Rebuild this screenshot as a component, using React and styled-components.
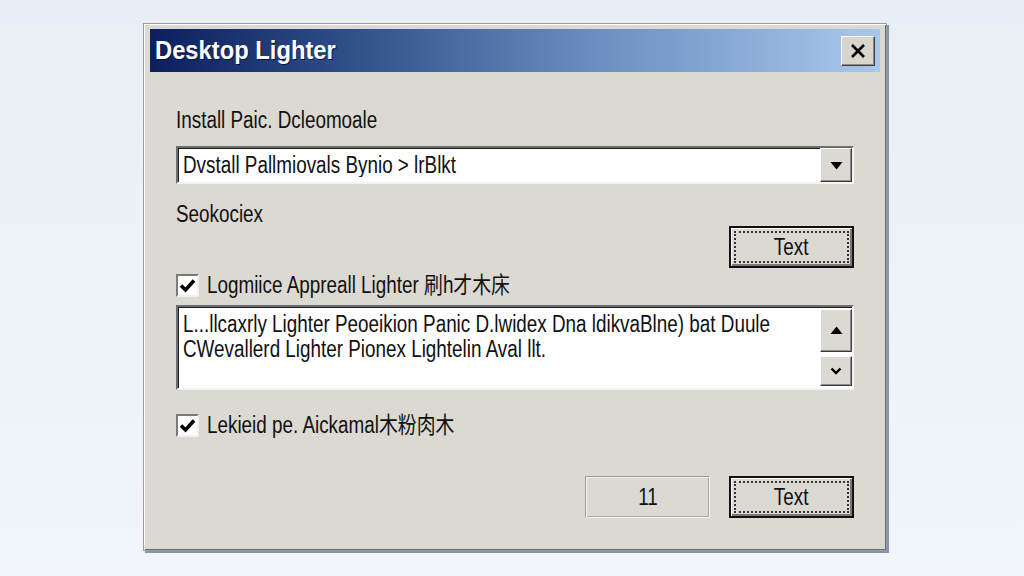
import React from 'react';
import styled, { createGlobalStyle } from 'styled-components';

const GlobalStyle = createGlobalStyle`
  html, body {
    margin: 0;
    height: 100%;
  }
  body {
    background: linear-gradient(180deg, #e8eef5 0%, #f2f6fa 100%);
    font-family: "Liberation Sans", Arial, "Noto Sans CJK SC", sans-serif;
    color: #111;
  }
`;

const Desktop = styled.div`
  width: 1024px;
  height: 576px;
  box-sizing: border-box;
  padding: 23px 0 0 143px;
`;

const Window = styled.div`
  width: 744px;
  height: 528px;
  box-sizing: border-box;
  background: #dcd9d3;
  border: 1px solid #9c9c9c;
  box-shadow: inset 1px 1px 0 #ffffff, inset -1px -1px 0 #6c6c6c, 2px 2px 0 #8797a5;
  padding: 5px 6px;
  display: flex;
  flex-direction: column;
`;

const TitleBar = styled.div`
  height: 43px;
  flex: none;
  display: flex;
  align-items: center;
  justify-content: space-between;
  padding: 0 5px;
  background: linear-gradient(90deg, #0b1f5e 0%, #2c4a86 25%, #6b8cbf 60%, #a8c8ec 100%);
`;

const Title = styled.span`
  display: inline-block;
  font-weight: bold;
  font-size: 25px;
  color: #ffffff;
  text-shadow: 1px 1px 0 #0a1430;
  transform: scaleX(0.95);
  transform-origin: left center;
`;

const CloseButton = styled.button`
  width: 34px;
  height: 30px;
  padding: 0;
  display: flex;
  align-items: center;
  justify-content: center;
  background: #d8d5cf;
  border: 1px solid;
  border-color: #ffffff #404040 #404040 #ffffff;
  box-shadow: inset -1px -1px 0 #8a8a8a;
`;

const Body = styled.div`
  flex: 1;
  display: flex;
  flex-direction: column;
  padding: 0 26px;
`;

/* condensed UI lettering */
const Narrow = styled.span`
  display: inline-block;
  font-size: 23px;
  line-height: 24px;
  white-space: nowrap;
  transform: scaleX(0.82);
  transform-origin: ${p => (p.$center ? 'center' : 'left')} center;
`;

const Label = styled.div`
  height: 24px;
  margin-top: ${p => p.$top}px;
`;

const Combo = styled.div`
  margin-top: 14px;
  height: 38px;
  box-sizing: border-box;
  display: flex;
  align-items: center;
  background: #ffffff;
  border: 2px solid;
  border-color: #6e6e6e #f4f4f4 #f4f4f4 #6e6e6e;
  box-shadow: inset 1px 1px 0 #1c1c1c;
  padding: 0 0 0 5px;
`;

const FieldText = styled.div`
  flex: 1;
  overflow: hidden;
`;

const ArrowButton = styled.div`
  width: 32px;
  height: ${p => p.$h}px;
  box-sizing: border-box;
  display: flex;
  align-items: center;
  justify-content: center;
  background: #dcd9d3;
  border: 1px solid;
  border-color: #ffffff #3c3c3c #3c3c3c #ffffff;
  box-shadow: inset -1px -1px 0 #8c8c8c;
`;

const ButtonRow = styled.div`
  display: flex;
  justify-content: flex-end;
  gap: 19px;
  margin-top: ${p => p.$top}px;
`;

const PushButton = styled.button`
  width: 125px;
  height: 42px;
  box-sizing: border-box;
  padding: 3px;
  background: #dcd9d3;
  font-family: inherit;
  color: #111;
  border: ${p => (p.$default ? '2px solid #111' : '1px solid')};
  border-color: ${p => (p.$default ? '#111' : '#9a9a9a #f4f4f4 #f4f4f4 #9a9a9a')};
  box-shadow: ${p =>
    p.$default
      ? 'inset 1px 1px 0 #ffffff, inset -2px -2px 0 #7a7a7a'
      : 'inset 1px 1px 0 #f2f2f2, inset -1px -1px 0 #a8a8a8'};
  cursor: pointer;
`;

const FocusRing = styled.span`
  display: flex;
  align-items: center;
  justify-content: center;
  height: 100%;
  box-sizing: border-box;
  border: ${p => (p.$on ? '2px dotted #333' : '1px solid transparent')};
`;

const CheckRow = styled.label`
  display: flex;
  align-items: center;
  gap: 8px;
  height: 24px;
  margin-top: ${p => p.$top}px;
`;

const CheckBox = styled.span`
  flex: none;
  width: 23px;
  height: 23px;
  box-sizing: border-box;
  display: flex;
  align-items: center;
  justify-content: center;
  background: #ffffff;
  border: 2px solid;
  border-color: #7a7a7a #f0f0f0 #f0f0f0 #7a7a7a;
`;

const TextArea = styled.div`
  margin-top: 8px;
  height: 85px;
  box-sizing: border-box;
  display: flex;
  background: #ffffff;
  border: 2px solid;
  border-color: #6e6e6e #f4f4f4 #f4f4f4 #6e6e6e;
  box-shadow: inset 1px 1px 0 #1c1c1c;
`;

const AreaText = styled.div`
  flex: 1;
  display: flex;
  flex-direction: column;
  gap: 1px;
  padding: 5px 0 0 5px;
  overflow: hidden;
`;

const ScrollColumn = styled.div`
  display: flex;
  flex-direction: column;
  justify-content: space-between;
  padding: 2px 0;
`;

const Check = () => (
  <svg width="17" height="15" viewBox="0 0 17 15">
    <path d="M2 7.5 L6.5 12 L15 2.5" fill="none" stroke="#000" strokeWidth="3.6" />
  </svg>
);

const Close = () => (
  <svg width="18" height="18" viewBox="0 0 18 18">
    <path d="M3 3 L15 15 M15 3 L3 15" stroke="#000" strokeWidth="2.6" />
  </svg>
);

const Triangle = ({ down }) => (
  <svg width="13" height="9" viewBox="0 0 13 9">
    <path d={down ? 'M0.5 1 H12.5 L6.5 8.5 Z' : 'M0.5 8 H12.5 L6.5 0.5 Z'} fill="#000" />
  </svg>
);

const Chevron = () => (
  <svg width="12" height="8" viewBox="0 0 12 8">
    <path d="M1.5 1.5 L6 6 L10.5 1.5" fill="none" stroke="#000" strokeWidth="2.4" />
  </svg>
);

export default function App() {
  return (
    <Desktop>
      <GlobalStyle />
      <Window>
        <TitleBar>
          <Title>Desktop Lighter</Title>
          <CloseButton aria-label="Close">
            <Close />
          </CloseButton>
        </TitleBar>
        <Body>
          <Label $top={36}>
            <Narrow>Install Paic. Dcleomoale</Narrow>
          </Label>
          <Combo>
            <FieldText>
              <Narrow>Dvstall Pallmiovals Bynio &gt; lrBlkt</Narrow>
            </FieldText>
            <ArrowButton $h={34}>
              <Triangle down />
            </ArrowButton>
          </Combo>
          <Label $top={18}>
            <Narrow>Seokociex</Narrow>
          </Label>
          <ButtonRow $top={0}>
            <PushButton $default>
              <FocusRing $on>
                <Narrow $center>Text</Narrow>
              </FocusRing>
            </PushButton>
          </ButtonRow>
          <CheckRow $top={5}>
            <CheckBox>
              <Check />
            </CheckBox>
            <Narrow>Logmiice Appreall Lighter 刷h才木床</Narrow>
          </CheckRow>
          <TextArea>
            <AreaText>
              <Narrow>L...llcaxrly Lighter Peoeikion Panic D.lwidex Dna ldikvaBlne) bat Duule</Narrow>
              <Narrow>CWevallerd Lighter Pionex Lightelin Aval llt.</Narrow>
            </AreaText>
            <ScrollColumn>
              <ArrowButton $h={43}>
                <Triangle />
              </ArrowButton>
              <ArrowButton $h={30}>
                <Chevron />
              </ArrowButton>
            </ScrollColumn>
          </TextArea>
          <CheckRow $top={23}>
            <CheckBox>
              <Check />
            </CheckBox>
            <Narrow>Lekieid pe. Aickamal木粉肉木</Narrow>
          </CheckRow>
          <ButtonRow $top={39}>
            <PushButton>
              <FocusRing>
                <Narrow $center>11</Narrow>
              </FocusRing>
            </PushButton>
            <PushButton $default>
              <FocusRing $on>
                <Narrow $center>Text</Narrow>
              </FocusRing>
            </PushButton>
          </ButtonRow>
        </Body>
      </Window>
    </Desktop>
  );
}
